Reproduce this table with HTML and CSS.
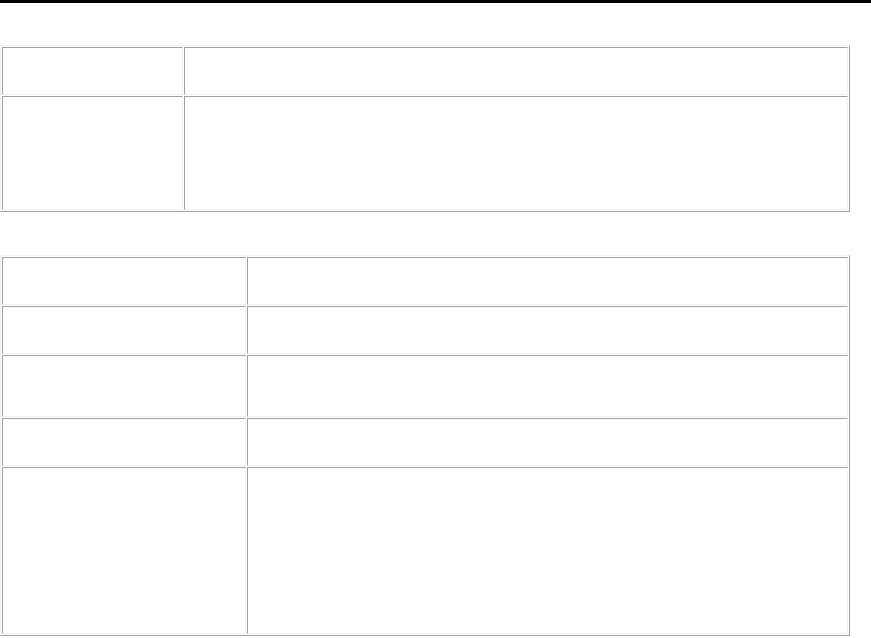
FILE: index.html
```html
<!DOCTYPE html>
<html>
<head>
<meta charset="utf-8">
<link rel="stylesheet" href="styles.css">
</head>
<body>
<div class="topbar"></div>
<table class="grid grid-a">
  <tr class="r48"><td class="c1a">&nbsp;</td><td>&nbsp;</td></tr>
  <tr class="r114"><td class="c1a">&nbsp;</td><td>&nbsp;</td></tr>
</table>
<table class="grid grid-b">
  <tr class="r48"><td class="c1b">&nbsp;</td><td>&nbsp;</td></tr>
  <tr class="r48"><td class="c1b">&nbsp;</td><td>&nbsp;</td></tr>
  <tr class="r62"><td class="c1b">&nbsp;</td><td>&nbsp;</td></tr>
  <tr class="r48"><td class="c1b">&nbsp;</td><td>&nbsp;</td></tr>
  <tr class="r170"><td class="c1b">&nbsp;</td><td>&nbsp;</td></tr>
</table>
</body>
</html>
```

FILE: styles.css
```css
html, body {
  margin: 0;
  padding: 0;
  background: #ffffff;
  font-family: "Liberation Serif", serif;
  font-size: 16px;
}
.topbar {
  height: 3px;
  background: #000000;
}
.grid {
  width: 850px;
  border-collapse: separate;
  border-spacing: 1px;
  border-top: 1px solid #f0f0f0;
  border-left: 1px solid #f0f0f0;
  border-right: 1px solid #a0a0a0;
  border-bottom: 1px solid #a0a0a0;
}
.grid td {
  padding: 0;
  border-top: 1px solid #a0a0a0;
  border-left: 1px solid #a0a0a0;
  border-right: 1px solid #f0f0f0;
  border-bottom: 1px solid #f0f0f0;
}
.grid-a { margin-top: 42px; }
.grid-b { margin-top: 43px; }
.c1a { width: 179px; }
.c1b { width: 242px; }
.r48 td { height: 46px; }
.r62 td { height: 60px; }
.r114 td { height: 112px; }
.r170 td { height: 165px; }
```
